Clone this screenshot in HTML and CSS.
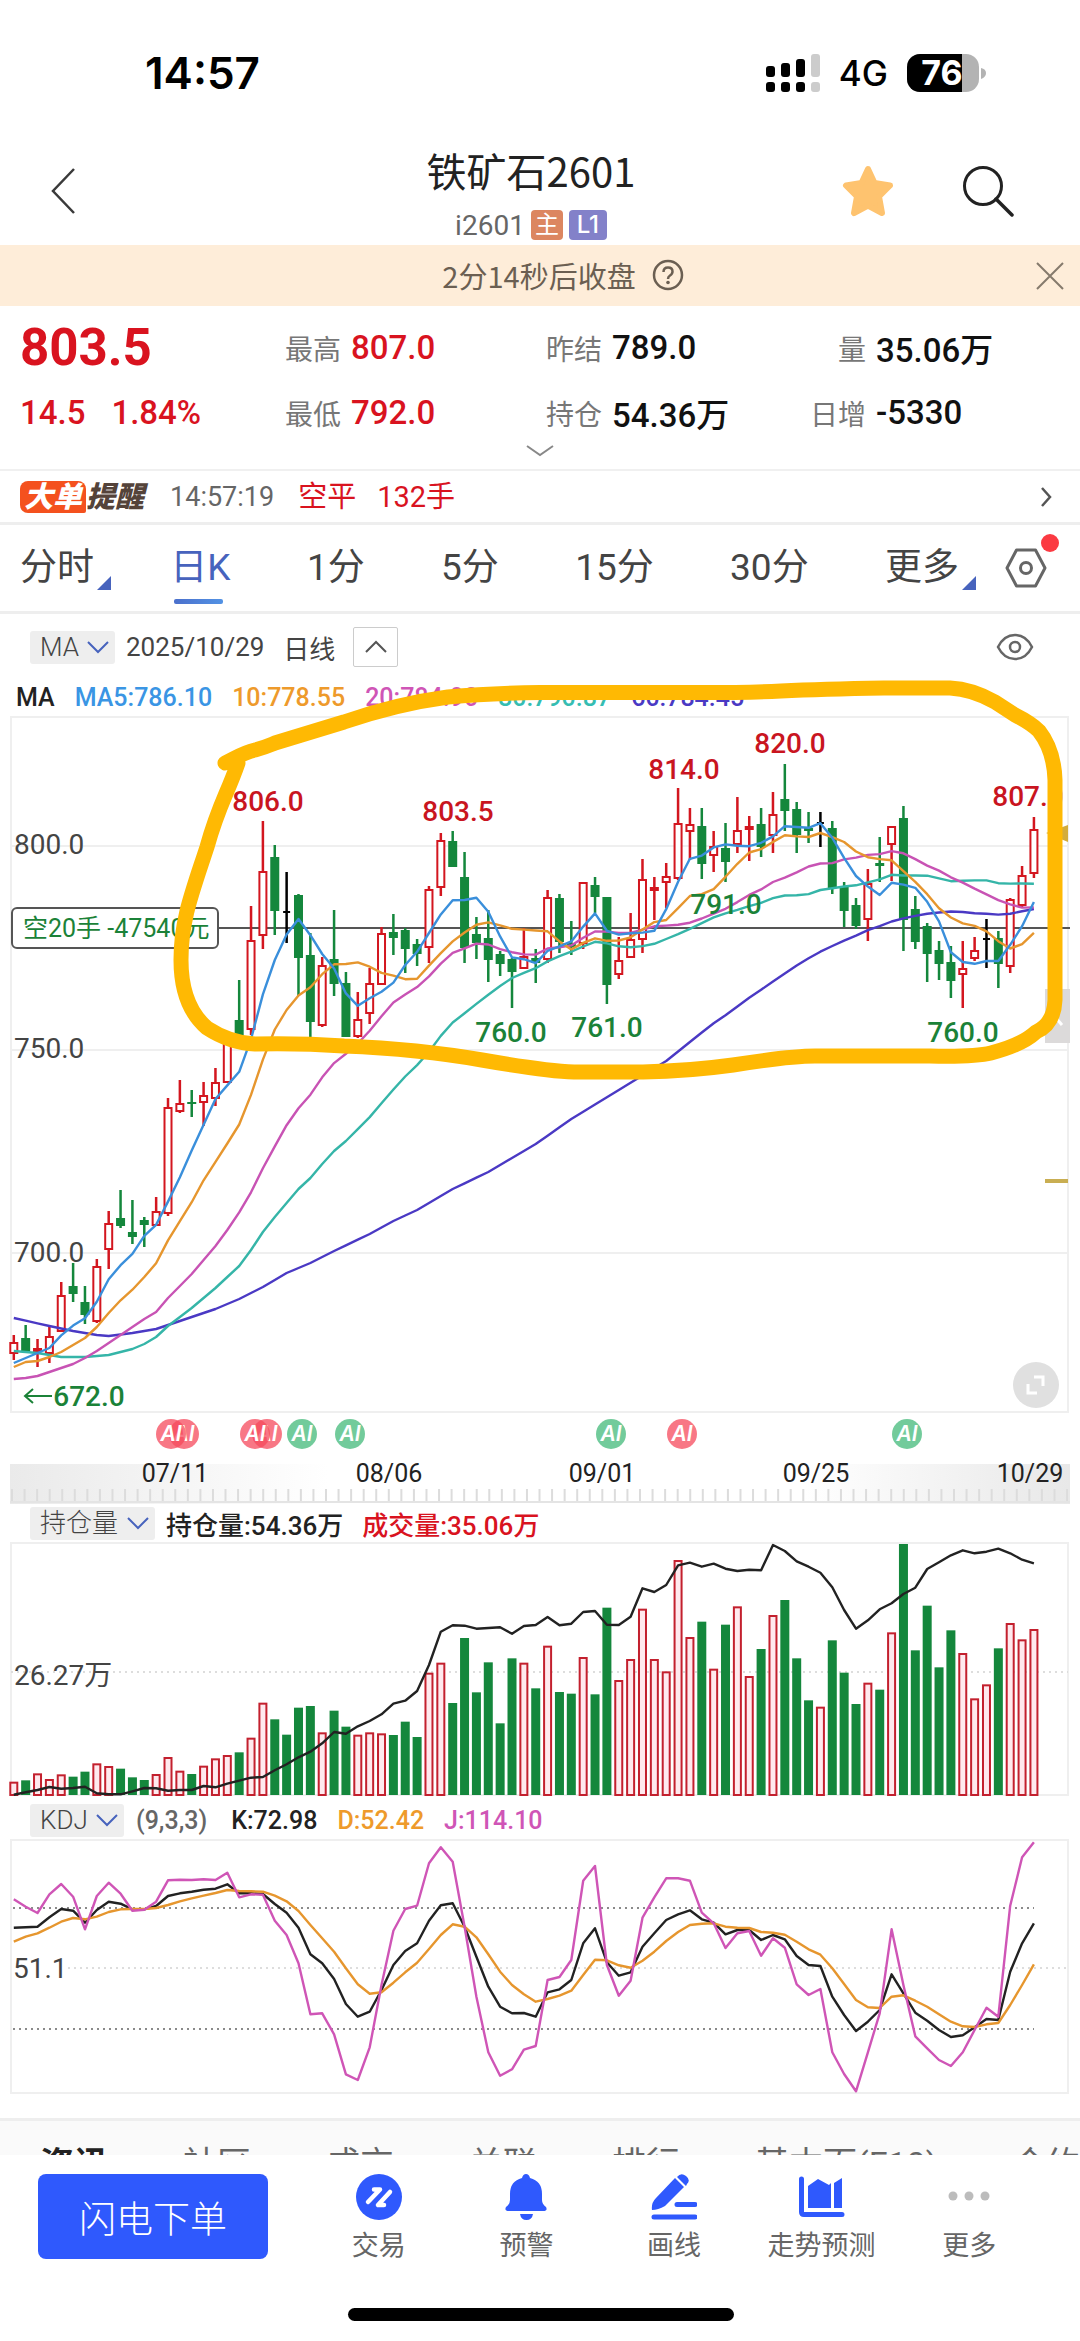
FILE: index.html
```html
<!DOCTYPE html>
<html lang="zh-CN">
<head>
<meta charset="utf-8">
<meta name="viewport" content="width=device-width, initial-scale=1">
<title>铁矿石2601</title>
<link rel="stylesheet" href="styles.css">
</head>
<body>
<div class="status">
  <span class="status-time">14:57</span>
  <div class="status-right">
    <svg class="signal" width="54" height="38" viewBox="0 0 54 38" aria-hidden="true">
      <g fill="#000"><rect x="0" y="12" width="9" height="11" rx="3"/><rect x="15" y="9" width="9" height="14" rx="3"/><rect x="30" y="5" width="9" height="18" rx="3"/><rect x="0" y="28" width="9" height="10" rx="3"/><rect x="15" y="28" width="9" height="10" rx="3"/><rect x="30" y="28" width="9" height="10" rx="3"/></g>
      <g fill="#ccc"><rect x="45" y="0" width="9" height="23" rx="3"/><rect x="45" y="28" width="9" height="10" rx="3"/></g>
    </svg>
    <span class="network">4G</span>
    <svg width="80" height="38" viewBox="0 0 80 38" role="img" aria-label="76%">
      <rect width="72" height="38" rx="13" fill="#b3b3b3"/>
      <path d="M13 0H55V38H13A13 13 0 0 1 0 25V13A13 13 0 0 1 13 0Z" fill="#000"/>
      <path d="M74 14q5 1 5 5t-5 6z" fill="#b3b3b3"/>
      <text x="35" y="31" text-anchor="middle" class="battery-text">76</text>
    </svg>
  </div>
</div>

<header class="header">
  <button class="icon-btn back" aria-label="返回"><svg width="28" height="46" viewBox="0 0 28 46"><path d="M26 1 5 23 26 45" fill="none" stroke="#3a3a3a" stroke-width="2.500"/></svg></button>
  <div class="heading">
    <h1>铁矿石2601</h1>
    <div class="code">i2601<span class="badge badge-main">主</span><span class="badge badge-l1">L1</span></div>
  </div>
  <div class="actions">
    <button class="icon-btn" aria-label="自选"><svg width="52" height="52" viewBox="0 0 52 52"><path d="M26 4 32.500 18 48 20.500 37 31.500 40 48 26 40.500 12 48 15 31.500 4 20.500 19.500 18Z" fill="#fec36f" stroke="#fec36f" stroke-width="6" stroke-linejoin="round"/></svg></button>
    <button class="icon-btn" aria-label="搜索"><svg width="52" height="52" viewBox="0 0 52 52"><circle cx="21" cy="21" r="18.500" fill="none" stroke="#222" stroke-width="3"/><path d="M34 34 50 50" stroke="#222" stroke-width="3.500" stroke-linecap="round"/></svg></button>
  </div>
</header>

<div class="banner">
  <p>2分14秒后收盘
    <svg width="32" height="32" viewBox="0 0 32 32" aria-hidden="true"><g fill="none" stroke="#6b5f52" stroke-width="2.500"><circle cx="16" cy="16" r="14"/><path d="M11.500 13q0-4.500 4.500-4.500t4.500 4q0 2.500-2.500 4-2 1.200-2 3.500"/></g><circle cx="16" cy="23.500" r="1.800" fill="#6b5f52"/></svg>
  </p>
  <button class="icon-btn" aria-label="关闭"><svg width="28" height="28" viewBox="0 0 28 28"><path d="M1 1 27 27M27 1 1 27" stroke="#857a6c" stroke-width="2"/></svg></button>
</div>

<section class="quote">
  <div class="quote-grid">
    <div class="price up">803.5</div>
    <div class="cell"><span>最高</span><b class="up">807.0</b></div>
    <div class="cell"><span>昨结</span><b>789.0</b></div>
    <div class="cell"><span>量</span><b>35.06万</b></div>
    <div class="change up"><span>14.5</span><span>1.84%</span></div>
    <div class="cell"><span>最低</span><b class="up">792.0</b></div>
    <div class="cell"><span>持仓</span><b>54.36万</b></div>
    <div class="cell"><span>日增</span><b>-5330</b></div>
  </div>
  <button class="icon-btn expand" aria-label="展开"><svg width="28" height="12" viewBox="0 0 28 12"><path d="M1 1 14 10 27 1" fill="none" stroke="#888" stroke-width="2"/></svg></button>
</section>

<a class="bigorder" href="#bigorder">
  <span class="bo-logo"><span class="bo-tag">大单</span><span class="bo-word">提醒</span></span>
  <span class="bo-time">14:57:19</span>
  <span class="up">空平</span>
  <span class="up">132手</span>
  <svg class="bo-arrow" width="11" height="20" viewBox="0 0 11 20" aria-hidden="true"><path d="M1 1 9 10 1 19" fill="none" stroke="#555" stroke-width="2.500"/></svg>
</a>

<nav class="periods">
  <div class="period-list">
    <button>分时<i class="tri"></i></button>
    <button class="on">日K</button>
    <button>1分</button>
    <button>5分</button>
    <button>15分</button>
    <button>30分</button>
    <button>更多<i class="tri"></i></button>
  </div>
  <button class="settings" aria-label="设置"><svg width="42" height="40" viewBox="0 0 42 40"><g fill="none" stroke="#666" stroke-width="3"><path d="M11.500 2H30.500L40 20 30.500 38H11.500L2 20Z" stroke-linejoin="round"/><circle cx="21" cy="20" r="5.500"/></g></svg><i class="dot"></i></button>
</nav>

<div class="tools">
  <span class="picker"><select aria-label="主图指标" class="w-ma"><option>MA</option></select><svg width="22" height="14" viewBox="0 0 22 14" aria-hidden="true"><path d="M1 2 11 12 21 2"/></svg></span>
  <span class="tool-text">2025/10/29</span>
  <span class="tool-text day">日线</span>
  <button class="fold" aria-label="收起"><svg width="22" height="14" viewBox="0 0 22 14"><path d="M1 12 11 2 21 12" fill="none" stroke="#555" stroke-width="2"/></svg></button>
  <button class="icon-btn eye" aria-label="显示"><svg width="38" height="28" viewBox="0 0 38 28"><g fill="none" stroke="#666" stroke-width="2.500"><path d="M2 14Q8 2 19 2T36 14Q30 26 19 26T2 14Z"/><circle cx="19" cy="14" r="5"/></g></svg></button>
</div>

<div class="legend">
  <span class="ink">MA</span><span class="c5">MA5:786.10</span><span class="c10">10:778.55</span><span class="c20">20:784.90</span><span class="c30">30:790.87</span><span class="c60">60:784.45</span>
</div>

<svg class="chart" viewBox="0 714 1080 790" role="img" aria-label="日K线">
  <defs>
    <linearGradient id="strip"><stop offset="0" stop-color="#eaeaea"/><stop offset=".3" stop-color="#fff"/><stop offset=".75" stop-color="#fff"/><stop offset="1" stop-color="#e8e8e8"/></linearGradient>
  </defs>
  <path class="frame" d="M11 717H1068V1412H11ZM11 846H1068M11 1050H1068M11 1253H1068"/>
  <path d="M218 928H1070" stroke="#555" stroke-width="2"/>
  <rect x="1045" y="989" width="25" height="54" fill="#dcdada"/>
  <path d="M1056 1018 1062 1025" stroke="#fff" stroke-width="3"/>
  <path d="M1046 833 1068 825V842Z" fill="#d3ac3c"/>
  <path d="M1045 1181H1068" stroke="#c9ae52" stroke-width="4"/>
  <g id="candles"></g>
  <g id="averages"></g>
  <g class="label axis"><text x="14" y="854">800.0</text><text x="14" y="1058">750.0</text><text x="14" y="1262">700.0</text></g>
  <g class="label high"><text x="268" y="811">806.0</text><text x="458" y="821">803.5</text><text x="684" y="779">814.0</text><text x="790" y="753">820.0</text><text x="1028" y="806">807.0</text></g>
  <g class="label low"><text x="726" y="914">791.0</text><text x="511" y="1042">760.0</text><text x="607" y="1037">761.0</text><text x="963" y="1042">760.0</text><text x="89" y="1406">672.0</text></g>
  <path d="M52 1396H25M33 1389 25 1396 33 1403" fill="none" stroke="#1b8238" stroke-width="2"/>
  <rect x="12" y="908" width="206" height="40" rx="5" fill="#fff" stroke="#555" stroke-width="2"/>
  <text class="position" x="23" y="937">空20手 -47540元</text>
  <circle cx="1036" cy="1385" r="23" fill="#e0e0e0"/>
  <path d="M1034 1377H1043V1386M1028 1384V1393H1037" fill="none" stroke="#fff" stroke-width="3"/>
  <g id="signals"></g>
  <rect x="10" y="1464" width="1060" height="40" fill="url(#strip)"/>
  <path class="ticks" d="M11 1496H1068"/>
  <path d="M10 1502H1070" stroke="#e4e4e4" stroke-width="2"/>
  <g class="date"><text x="175" y="1482">07/11</text><text x="389" y="1482">08/06</text><text x="602" y="1482">09/01</text><text x="816" y="1482">09/25</text><text x="1030" y="1482">10/29</text></g>
  <path class="marker" d="M225 763C234 759 242 753 255 750C266 747 270 745 275 743L344 722Q396 704 448 697Q490 693 540 692.500H678Q740 693 781 691T884 688H950Q972 689 995 702L1015 715Q1031 723 1039 731Q1054 750 1055 780V1000Q1054 1024 1036 1032Q1022 1045 991 1053Q975 1057 930 1056H815Q790 1056 733 1065Q690 1071 643 1072H574Q545 1071 482 1060T344 1046Q300 1043 255 1044Q230 1043 207 1028C186 1010 181 984 181 960C181 920 192 893 207 847C219 804 227 795 238 763"/>
</svg>

<div class="indicator">
  <span class="picker"><select aria-label="副图指标一" class="w-oi"><option>持仓量</option></select><svg width="22" height="14" viewBox="0 0 22 14" aria-hidden="true"><path d="M1 2 11 12 21 2"/></svg></span>
  <span class="ink">持仓量:54.36万</span><span class="up">成交量:35.06万</span>
</div>
<svg class="chart" viewBox="0 1542 1080 256" role="img" aria-label="持仓量与成交量">
  <path class="frame" d="M11 1543H1068V1795H11Z"/>
  <path class="dots pale" d="M11 1672H1068"/>
  <g id="volume"></g>
  <text class="label axis" x="14" y="1685">26.27万</text>
</svg>

<div class="indicator kdj">
  <span class="picker"><select aria-label="副图指标二" class="w-kdj"><option>KDJ</option></select><svg width="22" height="14" viewBox="0 0 22 14" aria-hidden="true"><path d="M1 2 11 12 21 2"/></svg></span>
  <span class="muted">(9,3,3)</span><span class="ink">K:72.98</span><span class="c10">D:52.42</span><span class="c20">J:114.10</span>
</div>
<svg class="chart" viewBox="0 1838 1080 258" role="img" aria-label="KDJ">
  <path class="frame" d="M11 1840H1068V2093H11Z"/>
  <path class="dots" d="M13 1908H1034M13 2029H1034"/>
  <path class="dots pale" d="M68 1968H1068"/>
  <g id="kdj"></g>
  <text class="label axis" x="13" y="1978">51.1</text>
</svg>

<nav class="info-tabs">
  <a class="on" href="#news">资讯</a><a href="#club">社区</a><a href="#deals">成交</a><a href="#related">关联</a><a href="#rank">排行</a><a href="#basics">基本面(F10)</a><a href="#contract">合约</a>
</nav>

<footer class="bottom">
  <div class="bottom-row">
    <button class="order">闪电下单</button>
    <nav class="bottom-nav">
      <a href="#trade"><svg width="46" height="46" viewBox="0 0 46 46" aria-hidden="true"><circle cx="23" cy="23" r="23" fill="#2f59fd"/><path d="M18 15.500H24L12 28M34 18 22 31H28" fill="none" stroke="#fff" stroke-width="4.500" stroke-linecap="round" stroke-linejoin="round"/></svg>交易</a>
      <a href="#alert"><svg width="46" height="46" viewBox="0 0 46 46" aria-hidden="true"><path d="M23 0q3 0 4 4 12 3 12 16v6q0 4 4 7 2 4-3 4H6q-5 0-3-4 4-3 4-7v-6Q7 7 19 4q1-4 4-4ZM17 40H30q-1 6-6.500 6T17 40Z" fill="#2f59fd"/></svg>预警</a>
      <a href="#draw"><svg width="46" height="46" viewBox="0 0 46 46" aria-hidden="true"><path d="M24 4 33 13 14 32Q7 36 1 36 0 29 5 24ZM26 3Q30-2 35 2T36 10L35 12Z" fill="#2f59fd"/><path d="M26 30.500H44M3 43H44" stroke="#2f59fd" stroke-width="5" stroke-linecap="round"/></svg>画线</a>
      <a href="#trend"><svg width="46" height="46" viewBox="0 0 46 46" aria-hidden="true"><path d="M2.500 5V38Q2.500 40.500 5 40.500H43" fill="none" stroke="#2f59fd" stroke-width="5" stroke-linecap="round"/><path d="M9 12 19 5 30 11 32 9V34H9ZM35 9 43 4V34H35Z" fill="#2f59fd"/></svg>走势预测</a>
      <a href="#more"><svg width="46" height="46" viewBox="0 0 46 46" aria-hidden="true"><g fill="#bcbcbc"><circle cx="7" cy="22" r="4.500"/><circle cx="23" cy="22" r="4.500"/><circle cx="39" cy="22" r="4.500"/></g></svg>更多</a>
    </nav>
  </div>
  <div class="home-bar"></div>
</footer>
<script src="script.js"></script>
</body>
</html>
```
FILE: styles.css
```css
* { box-sizing: border-box; }
body {
  margin: 0;
  background: #fff;
  color: #222;
  font-family: Roboto, "Noto Sans CJK SC", sans-serif;
  font-size: 26px;
}
button, select { font: inherit; color: inherit; border: 0; background: none; padding: 0; margin: 0; }
a { color: inherit; text-decoration: none; }
h1, p { margin: 0; font-weight: 400; }
svg { display: block; flex: none; }
.icon-btn { display: flex; }
.up { color: #d9131f; }
.ink { color: #222; }
.muted { color: #666; }
.c5 { color: #3a95e4; }
.c10 { color: #ee9a2b; }
.c20 { color: #cf55b6; }
.c30 { color: #35bdb2; }
.c60 { color: #4a39c4; }

.status {
  display: flex; justify-content: space-between; align-items: center;
  height: 96px; padding: 50px 93px 0 145px;
  font-family: Inter, sans-serif;
}
.status-time { font-size: 44px; font-weight: 600; color: #000; }
.status-right { display: flex; align-items: center; gap: 19px; }
.network { font-size: 35px; font-weight: 500; color: #000; }
.battery-text { font-size: 34px; font-weight: 700; fill: #fff; }

.header {
  display: grid; grid-template-columns: 1fr auto 1fr; align-items: center;
  height: 149px; padding: 40px 66px 0 48px;
}
.heading { align-self: end; display: flex; flex-direction: column; align-items: center; gap: 18px; padding-bottom: 5px; }
.heading h1 { font: 400 40px/44px "Noto Sans CJK SC", sans-serif; color: #222; }
.code { display: flex; align-items: center; gap: 6px; height: 30px; font-size: 28px; color: #666; }
.badge { height: 30px; border-radius: 4px; color: #fff; text-align: center; font-size: 24px; line-height: 30px; }
.badge-main { width: 32px; background: #dc8660; }
.badge-l1 { width: 38px; background: #8381c9; font-family: Inter, sans-serif; font-weight: 500; }
.actions { display: flex; justify-content: flex-end; gap: 68px; }

.banner {
  display: flex; align-items: center; height: 61px; padding: 0 16px 0 90px;
  background: #feedd9; color: #6b5f52;
}
.banner p { flex: 1; display: flex; justify-content: center; align-items: center; gap: 16px; font-family: "Noto Sans CJK SC", sans-serif; font-size: 29px; line-height: 40px; padding-bottom: 2px; }

.quote { height: 163px; padding: 9px 20px 0; }
.quote-grid { display: grid; grid-template-columns: 264fr 261fr 264fr 251fr; grid-auto-rows: 65px; align-items: center; }
.price { font-size: 51px; font-weight: 700; }
.change { display: flex; gap: 26px; font-size: 33px; font-weight: 500; }
.cell { display: flex; align-items: center; gap: 10px; white-space: nowrap; }
.cell span { width: 57px; text-align: right; font-size: 28px; color: #777; }
.cell b { font-size: 33px; font-weight: 500; }
.cell b:not(.up) { color: #111; }
.expand { margin: 0 auto; }

.bigorder {
  display: flex; align-items: center; height: 53px; padding: 0 28px 0 20px;
  border-top: 2px solid #f0f0f0; font-size: 29px; line-height: 40px;
}
.bo-logo { display: flex; align-items: center; font-weight: 900; font-style: italic; }
.bo-tag { padding: 0 4px 0 4px; height: 32px; line-height: 32px; border-radius: 8px 8px 2px 8px; background: #f4511e; color: #fff; }
.bo-word { color: #54433a; }
.bo-time { margin: 0 24px 0 26px; font-size: 27px; color: #666; }
.bigorder .up + .up { margin-left: 21px; }
.bo-arrow { margin-left: auto; }

.periods {
  display: flex; align-items: center; height: 92px; padding: 0 33px 0 20px;
  border-top: 3px solid #eee; border-bottom: 3px solid #eee;
}
.period-list { flex: 1; display: flex; justify-content: space-between; }
.period-list button { position: relative; font-size: 37px; line-height: 56px; color: #444; }
.period-list .on { color: #4763bd; }
.period-list .on::after {
  content: ""; position: absolute; left: 4px; right: 8px; bottom: -8px; height: 5px; border-radius: 2px;
  background: linear-gradient(90deg, #4b70cc, #5292e4);
}
.tri { position: absolute; left: 100%; bottom: 6px; width: 14px; height: 14px; margin-left: 3px; background: #4763bd; clip-path: polygon(100% 0, 100% 100%, 0 100%); }
.settings { display: flex; position: relative; margin-left: 46px; }
.dot { position: absolute; top: -14px; right: -12px; width: 18px; height: 18px; border-radius: 50%; background: #fb3a42; }

.tools { display: flex; align-items: center; height: 66px; padding: 0 46px 0 30px; }
.picker { display: flex; align-items: center; height: 33px; padding-right: 6px; border-radius: 3px; background: #eee; }
.picker select { appearance: none; height: 33px; padding-left: 10px; font-size: 26px; font-weight: 300; line-height: 33px; color: #444; font-family: Roboto, "Noto Sans CJK SC", sans-serif; }
.picker path { fill: none; stroke: #4763bd; stroke-width: 2px; }
.w-ma { width: 57px; }
.w-oi { width: 97px; }
.w-kdj { width: 66px; }
.tool-text { margin-left: 11px; color: #444; }
.tool-text.day { margin-left: 19px; }
.fold { display: flex; align-items: center; justify-content: center; width: 45px; height: 40px; margin-left: 18px; border: 1px solid #ccc; border-radius: 2px; }
.eye { margin-left: auto; }

.legend { display: flex; gap: 20px; height: 34px; padding-left: 16px; font-size: 25px; font-weight: 500; line-height: 36px; }

.chart { width: 100%; height: auto; overflow: visible; position: relative; }
.frame { fill: none; stroke: #efefef; stroke-width: 2px; }
.label { font-size: 28px; font-weight: 500; }
.axis { fill: #444; font-weight: 400; }
.high { fill: #c9151f; text-anchor: middle; }
.low { fill: #1b8238; text-anchor: middle; }
.position { font-size: 25px; fill: #1b8238; }
.date { font-size: 25px; fill: #222; text-anchor: middle; }
.ticks { stroke: #dcdcdc; stroke-width: 14px; stroke-dasharray: 2 10.560; }
.dots { stroke: #8a8a8a; stroke-width: 2px; stroke-dasharray: 2 4; }
.dots.pale { stroke: #ddd; }
.marker { fill: none; stroke: #ffb903; stroke-width: 15px; stroke-linecap: round; stroke-linejoin: round; }
.line { fill: none; stroke-width: 2.4px; stroke-linejoin: round; }
.ai { font: italic 600 21px Inter, sans-serif; fill: #fff; text-anchor: middle; }

.indicator { display: flex; align-items: center; gap: 19px; height: 38px; padding-left: 30px; font-size: 26px; font-weight: 500; }
.indicator .picker + span { margin-left: -8px; }
.indicator.kdj { height: 40px; padding-top: 4px; font-size: 25px; gap: 20px; }
.indicator .muted { margin-right: 4px; }

.info-tabs {
  display: flex; gap: 75px; height: 37px; margin-top: 22px; padding: 24px 0 0 40px; overflow: hidden;
  border-top: 3px solid #eee; background: #fafafa;
  font-size: 34px; line-height: 38px; white-space: nowrap; color: #666;
}
.info-tabs .on { font-weight: 700; color: #222; }

.bottom { padding: 19px 37px 20px 38px; }
.bottom-row { display: flex; align-items: flex-start; }
.order { width: 230px; height: 85px; border-radius: 8px; background: #2f59fd; color: #fff; font-size: 37px; font-weight: 300; }
.bottom-nav { flex: 1; display: grid; grid-template-columns: repeat(5, 1fr); margin-left: 37px; }
.bottom-nav a { display: flex; flex-direction: column; align-items: center; gap: 6px; font-size: 27px; line-height: 40px; color: #666; white-space: nowrap; }
.home-bar { width: 386px; height: 13px; margin: 42px auto 0; border-radius: 7px; background: #000; }
```
FILE: script.js
```js
// Each day: direction (r up, g down, k flat), then the y of the high, body top, body bottom and low.
const days = `r1335,1343,1353,1360 g1325,1338,1352,1352 r1339,1349,1351,1367 r1327,1337,1353,1363 r1282,1296,1331,1331
g1263,1286,1294,1302 g1286,1302,1315,1324 r1259,1267,1321,1323 r1211,1224,1249,1269 g1190,1218,1226,1228
g1200,1232,1237,1244 g1217,1220,1225,1247 r1197,1212,1225,1225 r1098,1108,1213,1216 r1080,1104,1111,1113
g1090,1102,1104,1117 r1082,1096,1102,1126 r1068,1083,1098,1106 r1040,1040,1082,1082 g980,1020,1036,1036
r906,941,1029,1035 r821,872,935,949 g845,857,911,935 k872,911,913,943 g894,895,958,996
g933,955,1022,1037 r957,966,1025,1027 g910,959,984,996 g972,983,1037,1037 r992,1020,1036,1038
r968,984,1013,1024 r927,934,984,984 g914,932,938,955 g928,930,949,973 g939,944,954,966
r886,890,947,963 r833,841,887,896 g831,841,867,867 g852,877,948,963 g917,934,943,959
g910,938,960,982 g951,954,964,976 g958,959,972,1008 r928,957,968,968 g949,958,963,983
r890,898,959,963 g894,898,942,953 g921,943,947,955 r882,883,943,949 g877,885,897,913
g897,897,985,1004 r937,961,974,979 r913,940,957,957 r859,880,939,953 r877,888,890,920
r863,877,882,908 r788,824,878,880 r808,825,831,860 g808,826,864,879 r831,847,855,872
g823,848,862,882 r797,831,844,853 r816,827,829,861 g808,824,847,857 r792,815,835,853
g764,799,811,831 g802,809,835,853 g812,828,831,843 k812,822,824,847 g821,828,888,894
g882,886,911,927 g898,905,926,929 r869,884,919,941 g837,863,866,882 r826,827,844,881
g806,818,920,951 g896,909,942,949 g923,926,954,982 g941,950,964,980 g946,962,981,998
r941,969,974,1008 r937,951,958,961 k919,938,940,968 g931,938,964,988 r898,900,966,973
r866,876,905,907 r817,830,873,878`.split(/\s+/).map(s => {
  const [high, top, bottom, low] = s.slice(1).split(',').map(Number);
  return { kind: s[0], high, top, bottom, low, close: s[0] === 'r' ? top : bottom };
});

const RED = '#d3161f', GREEN = '#14873c';
const colors = { r: RED, g: GREEN, k: '#000' };
const x = i => 13.8 + i * 11.862;
const el = id => document.getElementById(id);
const line = (ys, color, scale = v => v) =>
  `<polyline class="line" stroke="${color}" points="${ys.map((v, i) => x(i).toFixed(1) + ',' + scale(v).toFixed(1)).join(' ')}"/>`;
const list = s => s.split(' ').map(Number);

el('candles').innerHTML = days.map((d, i) => {
  const cx = x(i), c = colors[d.kind];
  const wick = `<path d="M${cx} ${d.high}V${d.top}M${cx} ${d.bottom}V${d.low}" stroke="${c}" stroke-width="2.500"/>`;
  const body = d.kind === 'r'
    ? `<rect x="${cx - 3.5}" y="${d.top}" width="7" height="${Math.max(1, d.bottom - d.top)}" fill="#fff" stroke="${c}" stroke-width="2"/>`
    : `<rect x="${cx - (d.kind === 'k' ? 3.5 : 4.5)}" y="${d.top}" width="${d.kind === 'k' ? 7 : 9}" height="${d.bottom - d.top}" fill="${c}"/>`;
  return wick + body;
}).join('');

// Moving averages: the first values come from days before the window.
const average = (n, lead) => days.map((_, i) => i < lead.length ? lead[i]
  : days.slice(i - n + 1, i + 1).reduce((sum, d) => sum + d.close, 0) / n);
const anchors = [[0, 1318], [3, 1326], [5, 1331], [7, 1335], [8, 1336], [10, 1333], [12, 1329], [15, 1317], [17, 1309], [19, 1299], [21, 1287], [23, 1273], [25, 1263], [27, 1251], [30, 1234], [32, 1221], [34, 1210], [37, 1189], [40, 1172], [44, 1144], [47, 1119], [51, 1090], [55, 1061], [59, 1023]];
const lead60 = [];
anchors.slice(1).forEach(([i1, y1], k) => {
  const [i0, y0] = anchors[k];
  for (let i = i0; i < i1; i++) lead60.push(y0 + (y1 - y0) * (i - i0) / (i1 - i0));
});
el('averages').innerHTML =
  line(average(60, lead60), '#4a39c4') +
  line(average(30, list('1351 1352 1353 1355 1357 1357 1357 1356 1355 1352 1349 1344 1337 1326 1317 1308 1298 1288 1277 1266 1250 1232 1217 1203 1189 1178 1164 1151 1141')), '#35b5a8') +
  line(average(20, list('1379 1378 1376 1372 1368 1364 1358 1351 1343 1335 1327 1319 1312 1298 1286 1274 1260 1246 1230')), '#c853b4') +
  line(average(10, list('1367 1362 1361 1357 1352 1345 1338 1327 1313')), '#e6962e') +
  line(average(5, list('1363 1358 1353 1348')), '#3a8fdb');

// Drawn from right to left, so that the earlier of two close signals lies on top.
el('signals').innerHTML = [[907, 0], [682, 1], [611, 0], [350, 0], [302, 0], [267, 1], [255, 1], [184, 1], [171, 1]]
  .map(([cx, red]) => `<circle cx="${cx}" cy="1434" r="15" fill="${red ? '#f64a5c' : '#43b97a'}" fill-opacity=".75"/><text class="ai" x="${cx}" y="1441">AI</text>`).join('');

// Lower panels share a scale of three units to the pixel.
const volumes = list('845 841 820 837 823 830 815 790 798 806 832 840 822 771 812 822 797 775 765 757 713 608 658 704 623 618 697 632 680 704 697 700 705 665 711 518 488 609 414 577 487 670 475 488 565 437 576 581 471 583 323 540 477 326 477 514 180 411 365 506 374 319 528 447 345 300 475 601 620 421 518 612 548 569 397 132 451 317 502 391 459 595 553 445 369 418 387');
const interest = list('884 877 870 861 866 864 860 880 883 883 874 864 865 872 870 870 858 862 851 842 833 831 811 793 772 755 730 696 701 679 663 643 611 602 573 495 395 376 377 386 384 382 401 378 375 351 376 371 336 333 374 375 350 265 276 255 196 188 200 191 206 213 209 211 135 153 184 200 218 262 330 386 361 328 310 282 263 207 187 166 151 160 155 146 160 179 190');
const low = v => 1500 + v / 3;
el('volume').innerHTML = volumes.map((v, i) => {
  const red = days[i].kind === 'r' || i === 68 || i === 82, y = low(v);
  return red
    ? `<rect x="${x(i) - 3.5}" y="${y + 1}" width="7" height="${1794 - y}" fill="#ffe9ee" stroke="#c3202e" stroke-width="2"/>`
    : `<rect x="${x(i) - 4.5}" y="${y}" width="9" height="${1795 - y}" fill="${GREEN}"/>`;
}).join('') + line(interest, '#222', low);

const K = list('383 382 380 352 327 332 368 330 305 311 328 328 318 288 280 275 269 266 253 280 280 282 312 338 383 463 490 537 612 650 635 570 495 453 430 362 316 310 380 470 560 620 640 639 650 577 568 540 430 385 487 527 517 440 400 360 343 331 358 368 403 390 390 420 405 418 468 495 498 590 645 693 665 630 523 580 638 662 690 711 706 682 657 660 515 430 370');
const D = list('425 410 400 383 365 354 358 350 336 328 327 327 324 315 304 295 287 279 270 273 274 275 287 304 333 375 415 455 505 553 581 577 548 517 488 447 405 373 380 412 463 515 555 583 605 597 587 572 525 479 481 496 503 482 455 423 396 375 371 370 380 383 384 396 398 404 425 448 464 505 552 600 622 624 590 586 602 620 643 665 679 681 673 669 615 555 493');
const J = list('298 320 339 283 252 290 388 288 248 281 332 329 305 241 239 240 238 240 218 292 283 284 362 405 490 643 640 703 823 840 742 555 392 327 317 190 142 185 380 590 757 827 808 749 738 540 531 480 242 198 495 587 542 353 292 235 235 242 338 370 444 400 393 467 415 443 553 585 567 757 822 874 757 640 388 555 709 745 780 798 757 690 623 650 317 172 127');
const kdjY = v => 1800 + v / 3;
el('kdj').innerHTML = line(K, '#222', kdjY) + line(D, '#e6962e', kdjY) + line(J, '#cf55b6', kdjY);
```
